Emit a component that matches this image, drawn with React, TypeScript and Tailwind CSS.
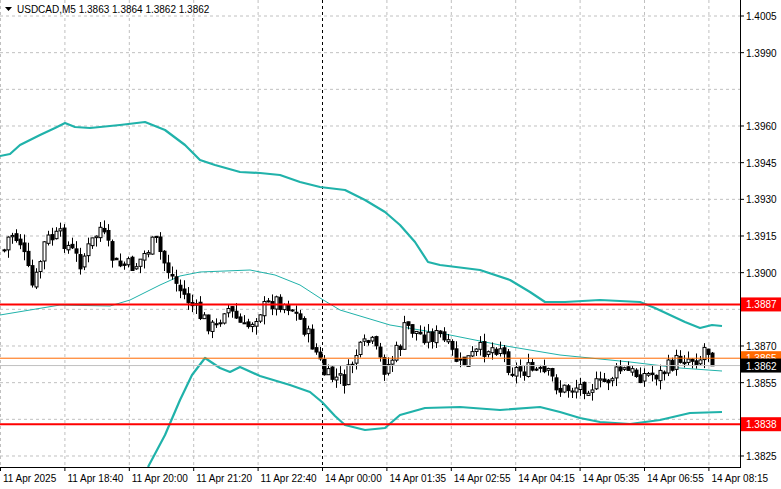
import React from "react";

const W = 781;
const PX = 740; // right edge of plot
const PY = 467; // bottom edge of plot
const py = (p: number) => 16 + (1.4005 - p) * 24444;

const priceLabels = [1.4005, 1.399, 1.396, 1.3945, 1.393, 1.3915, 1.39, 1.387, 1.3855, 1.3825];
const gridPrices = [1.4005, 1.399, 1.3975, 1.396, 1.3945, 1.393, 1.3915, 1.39, 1.3885, 1.387, 1.3855, 1.384, 1.3825];
const timeLabels = ["11 Apr 2025", "11 Apr 18:40", "11 Apr 20:00", "11 Apr 21:20", "11 Apr 22:40", "14 Apr 00:00", "14 Apr 01:35", "14 Apr 02:55", "14 Apr 04:15", "14 Apr 05:35", "14 Apr 06:55", "14 Apr 08:15"];

// rough close path, in pixel coordinates
const path: [number, number][] = [
  [4, 250], [10, 232], [20, 242], [33, 290], [45, 240], [60, 236], [80, 262], [100, 228], [115, 265], [135, 266],
  [155, 240], [165, 265], [180, 290], [200, 316], [215, 330], [225, 305], [245, 330], [260, 310], [275, 300], [290, 306],
  [300, 320], [315, 350], [325, 376], [345, 380], [355, 355], [370, 340], [385, 370], [400, 345], [405, 325], [420, 335],
  [440, 336], [460, 365], [480, 350], [500, 346], [510, 370], [530, 370], [550, 376], [560, 390], [580, 386], [600, 385],
  [620, 370], [640, 375], [660, 374], [680, 358], [700, 358], [705, 345], [714, 362],
];
const interp = (pts: [number, number][], x: number) => {
  for (let i = 1; i < pts.length; i++) {
    if (x <= pts[i][0]) {
      const [x0, y0] = pts[i - 1];
      const [x1, y1] = pts[i];
      return y0 + ((y1 - y0) * (x - x0)) / (x1 - x0);
    }
  }
  return pts[pts.length - 1][1];
};

let seed = 7;
const rnd = () => {
  seed = (seed * 9301 + 49297) % 233280;
  return seed / 233280;
};

const candles: { x: number; o: number; c: number; h: number; l: number }[] = [];
let prev = 250;
for (let x = 4; x <= 714; x += 4) {
  const c = interp(path, x) + (rnd() - 0.5) * 16;
  const o = prev + (rnd() - 0.5) * 4;
  const h = Math.min(o, c) - rnd() * 9;
  const l = Math.max(o, c) + rnd() * 9;
  candles.push({ x, o, c, h, l });
  prev = c;
}

const upper: [number, number][] = [
  [0, 156], [10, 154], [20, 145], [40, 135], [55, 128], [65, 123], [75, 127], [90, 128], [120, 125], [145, 122],
  [165, 130], [185, 145], [200, 160], [215, 165], [240, 172], [260, 173], [280, 175], [300, 182], [320, 187], [345, 190],
  [365, 200], [385, 212], [400, 225], [415, 242], [428, 262], [440, 265], [480, 270], [510, 280], [530, 292], [545, 302],
  [565, 302], [600, 300], [640, 302], [655, 308], [670, 315], [685, 322], [700, 328], [712, 325], [722, 326],
];
const middle: [number, number][] = [
  [0, 315], [60, 305], [110, 306], [130, 300], [160, 285], [180, 276], [200, 272], [250, 270], [275, 275], [300, 285],
  [320, 298], [340, 310], [390, 325], [450, 335], [500, 345], [560, 355], [630, 362], [680, 368], [722, 371],
];
const lower: [number, number][] = [
  [148, 467], [165, 435], [180, 400], [192, 375], [205, 358], [220, 368], [230, 372], [240, 367], [260, 376], [290, 385],
  [310, 392], [322, 402], [335, 416], [345, 425], [365, 430], [385, 428], [400, 415], [425, 408], [460, 407], [500, 410],
  [540, 407], [560, 412], [580, 418], [600, 422], [630, 424], [660, 420], [690, 413], [722, 412],
];
const toD = (pts: [number, number][]) => pts.map(([x, y], i) => `${i ? "L" : "M"}${x},${y}`).join(" ");

const font = "'Liberation Sans', Arial, sans-serif";

function Tag({ y, text, bg, fg }: { y: number; text: string; bg: string; fg: string }) {
  return (
    <g>
      <rect x={741} y={y - 7} width={40} height={14} fill={bg} />
      <text x={746} y={y + 4} fontSize={10} fill={fg} fontFamily={font}>{text}</text>
    </g>
  );
}

export default function App() {
  return (
    <div className="w-[781px] h-[489px] bg-white overflow-hidden">
      <svg width={W} height={489} className="block">
        {gridPrices.map((p) => (
          <line key={p} x1={0} x2={PX} y1={py(p)} y2={py(p)} stroke="#c0c0c0" strokeDasharray="3 3" />
        ))}
        {timeLabels.map((_, i) => (
          <line key={i} x1={i * 64.4 + 0.5} x2={i * 64.4 + 0.5} y1={0} y2={PY} stroke="#c0c0c0" strokeDasharray="3 3" />
        ))}
        <line x1={322.5} x2={322.5} y1={0} y2={PY} stroke="#000" strokeDasharray="3 3" />

        <path d={toD(upper)} fill="none" stroke="#20b2aa" strokeWidth={2.2} strokeLinejoin="round" />
        <path d={toD(middle)} fill="none" stroke="#20b2aa" strokeWidth={1} strokeLinejoin="round" />
        <path d={toD(lower)} fill="none" stroke="#20b2aa" strokeWidth={2.2} strokeLinejoin="round" />

        {candles.map((k, i) => {
          const top = Math.min(k.o, k.c);
          const h = Math.max(1, Math.abs(k.o - k.c));
          const bull = k.c < k.o;
          return (
            <g key={i}>
              <line x1={k.x + 0.5} x2={k.x + 0.5} y1={k.h} y2={k.l} stroke="#000" />
              <rect x={k.x - 1} y={top} width={3} height={h} fill={bull ? "#fff" : "#000"} stroke="#000" strokeWidth={1} />
            </g>
          );
        })}

        <line x1={0} x2={PX} y1={py(1.3887)} y2={py(1.3887)} stroke="#ff0000" strokeWidth={2} />
        <line x1={0} x2={PX} y1={py(1.3838)} y2={py(1.3838)} stroke="#ff0000" strokeWidth={2} />
        <line x1={0} x2={PX} y1={py(1.3865)} y2={py(1.3865)} stroke="#ff6a00" strokeWidth={1} />
        <line x1={0} x2={PX} y1={py(1.3862)} y2={py(1.3862)} stroke="#c0c0c0" strokeWidth={1} />

        <line x1={PX + 0.5} x2={PX + 0.5} y1={0} y2={PY} stroke="#000" />
        <line x1={0} x2={PX + 1} y1={PY + 0.5} y2={PY + 0.5} stroke="#000" />

        {priceLabels.map((p) => (
          <g key={p}>
            <line x1={PX} x2={PX + 4} y1={py(p)} y2={py(p)} stroke="#000" />
            <text x={746} y={py(p) + 4} fontSize={10} fill="#000" fontFamily={font}>{p.toFixed(4)}</text>
          </g>
        ))}
        {timeLabels.map((t, i) => (
          <g key={t}>
            <line x1={i * 64.4 + 0.5} x2={i * 64.4 + 0.5} y1={PY} y2={PY + 4} stroke="#000" />
            <text x={i * 64.4 + 3} y={482} fontSize={10} fill="#000" fontFamily={font}>{t}</text>
          </g>
        ))}

        <Tag y={py(1.3887)} text="1.3887" bg="#ff0000" fg="#fff" />
        <Tag y={py(1.3865)} text="1.3865" bg="#ff6a00" fg="#fff" />
        <Tag y={py(1.3862)} text="1.3862" bg="#000" fg="#fff" />
        <Tag y={py(1.3838)} text="1.3838" bg="#ff0000" fg="#fff" />

        <path d="M5,7 L12,7 L8.5,11 Z" fill="#000" />
        <text x={17} y={13} fontSize={10} fill="#000" fontFamily={font}>USDCAD,M5  1.3863 1.3864 1.3862 1.3862</text>
      </svg>
    </div>
  );
}
